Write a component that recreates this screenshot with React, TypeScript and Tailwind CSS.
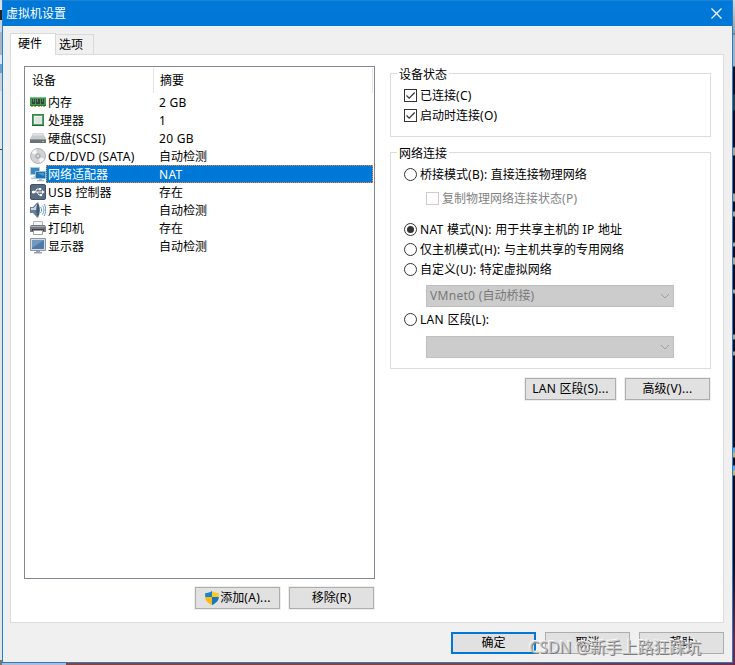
import { useState } from 'react';
import type { ReactNode } from 'react';

// Latin runs are spaced a little wider than the Chinese ones
const Txt = ({ children }: { children: string }) => (
    <>
        {children.split(/([\x20-\x7e]+)/).map((part, i) =>
            i % 2 ? <span key={i} className="tracking-[0.3px] whitespace-pre">{part}</span> : part
        )}
    </>
);

const MemoryIcon = () => (
    <svg width="16" height="16" viewBox="0 0 16 16" shapeRendering="crispEdges">
        <path d="M0 3h16v9H0z" fill="#3f9a4d" />
        <path d="M0 3h16v1H0z" fill="#7cc385" />
        <path d="M2 5h3v5H2zM6 5h4v5H6zM11 5h3v5h-3z" fill="#33433a" />
        <path d="M3 5h1v3H3zM7 5h1v3H7zM12 5h1v3h-1z" fill="#71817a" />
        <path d="M1 12h2v1H1zM4 12h2v1H4zM8 12h2v1H8zM11 12h1v1h-1zM13 12h2v1h-2z" fill="#c79f3d" />
        <path d="M0 11h16v1H0z" fill="#23733a" />
    </svg>
);

const CpuIcon = () => (
    <svg width="16" height="16" viewBox="0 0 16 16">
        <path d="M2 2h12v12H2z" fill="#37864d" />
        <path d="M3 3h10v10H3z" fill="#55a36a" />
        <path d="M4 4h8v8H4z" fill="#f1f3f2" />
        <path d="M5 5h7v7H5z" fill="#dfe3e1" />
        <path d="M2 13h12v1H2z" fill="#1e6634" />
    </svg>
);

const DiskIcon = () => (
    <svg width="16" height="16" viewBox="0 0 16 16">
        <path d="M3 3h10l3 6H0z" fill="#c6c9ce" />
        <path d="M3.5 3.5h9l1 2h-11z" fill="#e1e3e6" />
        <path d="M0 9h16v4H0z" fill="#6d727a" />
        <path d="M0 9h16v1H0z" fill="#91959c" />
        <path d="M12 11h2v1h-2z" fill="#74d878" />
    </svg>
);

const DiscIcon = () => (
    <svg width="16" height="16" viewBox="0 0 16 16">
        <circle cx="8" cy="8" r="7.5" fill="#d2d3d6" stroke="#a1a4aa" strokeWidth="0.8" />
        <path d="M8 8 1.6 5A7 7 0 0 1 6 1.3zM8 8l6.4 3a7 7 0 0 1-4.4 3.7z" fill="#f6f6f7" />
        <circle cx="8" cy="8" r="3" fill="#b7bac0" />
        <circle cx="8" cy="8" r="1.4" fill="#fff" stroke="#888c94" strokeWidth="0.6" />
    </svg>
);

const NetworkIcon = () => (
    <svg width="16" height="16" viewBox="0 0 16 16">
        <path d="M0.5 1.5h9v7h-9z" fill="#3c88bd" stroke="#a9cbe0" />
        <path d="M2 10h3v3H1v-1.5h2.5V10z" fill="#b5cbdc" />
        <path d="M5.5 5.5h10v7h-10z" fill="#2371aa" stroke="#8ec0e0" />
        <path d="M7 7h7v3z" fill="#4b9ccd" />
        <path d="M9 13h3v1h2v1.3H7V14h2z" fill="#a8bdcd" />
    </svg>
);

const UsbIcon = () => (
    <svg width="16" height="16" viewBox="0 0 16 16">
        <rect x="0.5" y="0.5" width="15" height="15" rx="1.5" fill="#586b80" stroke="#405268" />
        <path d="M3 8h10M5 8l2-3h2M7 8l2 3h2" fill="none" stroke="#fff" strokeWidth="1" />
        <circle cx="3.4" cy="8" r="1.6" fill="#fff" />
        <path d="m12 6 2.7 2L12 10zM9 4h2.2v2.2H9z" fill="#fff" />
        <circle cx="11" cy="11" r="1.2" fill="#fff" />
    </svg>
);

const SoundIcon = () => (
    <svg width="16" height="16" viewBox="0 0 16 16">
        <path d="M0 5h3l4-4.5h1.5v15H7L3 11H0z" fill="#687f96" />
        <path d="M1 6h2.5L7 2.5V8H1z" fill="#c5d6e4" />
        <ellipse cx="8" cy="8" rx="1.8" ry="6" fill="#405b76" />
        <path d="M10.5 5c1.5 1.5 1.5 4.5 0 6M12.3 3.5c2.2 2.5 2.2 6.5 0 9M14 2c2.3 3 2.3 9 0 12" fill="none" stroke="#5c9bcf" strokeWidth="1" />
    </svg>
);

const PrinterIcon = () => (
    <svg width="16" height="16" viewBox="0 0 16 16">
        <path d="M3.5 1.5h9v5h-9z" fill="#f5f5f6" stroke="#b2b3b8" />
        <path d="M1 5h14l1 2v5H0V7z" fill="#777a82" />
        <path d="M1 6h14v1H1z" fill="#a8abb1" />
        <path d="M2 9h12v2H2z" fill="#3e4048" />
        <path d="M3.5 10.5h9v4h-9z" fill="#fff" stroke="#9b9da3" />
    </svg>
);

const DisplayIcon = () => (
    <svg width="16" height="16" viewBox="0 0 16 16">
        <path d="M0.5 0.5h15v12H0.5z" fill="#d5dce3" stroke="#8b97a3" />
        <path d="M2 2h12v9H2z" fill="#4f7aa5" />
        <path d="M2 2h12L2 10z" fill="#7199bf" />
        <path d="M6 13h4v1h2v1.5H4V14h2z" fill="#9aa3ad" />
    </svg>
);

const ShieldIcon = () => (
    <svg width="16" height="16" viewBox="0 0 16 16">
        <path d="M8 1C6 2.6 3.5 3 1.2 3v4H8z" fill="#1d83cc" />
        <path d="M8 1c2 1.6 4.500 2 6.800 2v4H8z" fill="#fcc827" />
        <path d="M1.200 7c0 4 3.500 6.500 6.800 8V7z" fill="#f8b916" />
        <path d="M14.800 7c0 4-3.500 6.500-6.800 8V7z" fill="#1677bc" />
    </svg>
);

const devices = [
    { name: '内存', summary: '2 GB', icon: <MemoryIcon /> },
    { name: '处理器', summary: '1', icon: <CpuIcon /> },
    { name: '硬盘(SCSI)', summary: '20 GB', icon: <DiskIcon /> },
    { name: 'CD/DVD (SATA)', summary: '自动检测', icon: <DiscIcon /> },
    { name: '网络适配器', summary: 'NAT', icon: <NetworkIcon /> },
    { name: 'USB 控制器', summary: '存在', icon: <UsbIcon /> },
    { name: '声卡', summary: '自动检测', icon: <SoundIcon /> },
    { name: '打印机', summary: '存在', icon: <PrinterIcon /> },
    { name: '显示器', summary: '自动检测', icon: <DisplayIcon /> },
];

const Button = ({ children, className = 'w-[85px]', primary = false }: { children: ReactNode; className?: string; primary?: boolean }) => (
    <button className={`h-[22px] flex items-center justify-center bg-[#e1e1e1] ${primary ? 'border-2 border-[#0078d7]' : 'border border-[#adadad] outline outline-[#efefef]'} ${className}`}>
        {children}
    </button>
);

const Group = ({ title, children, className }: { title: string; children: ReactNode; className: string }) => (
    <section className={`relative border border-[#dcdcdc] ${className}`}>
        <h2 className="absolute left-[6px] -top-[8px] bg-white px-[2px] leading-[18px]">{title}</h2>
        {children}
    </section>
);

const Check = ({ label, checked, disabled }: { label: string; checked?: boolean; disabled?: boolean }) => (
    <label className={`flex h-[20px] items-center gap-[3px] ${disabled ? 'text-[#838383]' : ''}`}>
        <span className={`size-[13px] border bg-white -translate-y-px ${disabled ? 'border-[#cccccc]' : 'border-[#333]'}`}>
            {checked && (
                <svg width="11" height="11" viewBox="0 0 11 11" fill="none" stroke="#333" strokeWidth="1.2">
                    <path d="m1.500 5.500 2.700 2.700L9.700 2.500" />
                </svg>
            )}
        </span>
        <span><Txt>{label}</Txt></span>
    </label>
);

const Radio = ({ label, checked, onClick }: { label: string; checked: boolean; onClick: () => void }) => (
    <label className="flex h-[20px] items-center gap-[3px]" onClick={onClick}>
        <span className="size-[13px] rounded-full border border-[#333] bg-white flex items-center justify-center -translate-y-px">
            {checked && <span className="size-[7px] rounded-full bg-[#333]" />}
        </span>
        <span><Txt>{label}</Txt></span>
    </label>
);

const Combo = ({ value = '' }: { value?: string }) => (
    <div className="ml-[22px] w-[248px] h-[22px] flex items-center justify-between border border-[#bfbfbf] bg-[#cccccc] pl-[3px] pr-[3px] text-[#787878]">
        <span><Txt>{value}</Txt></span>
        <svg width="10" height="6" viewBox="0 0 10 6" fill="none" stroke="#a0a0a0">
            <path d="m1 1 4 4 4-4" />
        </svg>
    </div>
);

export default function App() {
    const [selected, setSelected] = useState(4);
    const [mode, setMode] = useState('nat');

    return (
        <div className="relative w-[735px] h-[665px] overflow-hidden flex bg-[#8e4334] text-[12px] leading-[18px] text-black font-['Noto_Sans','Noto_Sans_CJK_SC',sans-serif]">
            <div className="w-[2px] h-[665px] shrink-0 bg-[linear-gradient(#d9dfe6_0_10px,#222_10px_20px,#c9d2dc_20px_32px,#aab4c4_32px_55px,#dce6ef_55px_64px,#6f9dce_64px_73px,#ccd0d8_73px_91px,#e4e4e4_91px_149px,#345_149px_150px,#e4e4e4_150px_660px,#777_660px)]" />

            <div className="w-[731px] h-[665px] flex flex-col">
                <main className="h-[663px] bg-[#f0f0f0] border-x border-b border-[#1883d7] flex flex-col">
                    <header className="h-[26px] shrink-0 bg-[#0078d7] border-t border-[#1883d7] text-white flex items-center justify-between pl-[3px] pr-[10px]">
                        <h1>虚拟机设置</h1>
                        <svg width="11" height="11" viewBox="0 0 11 11" stroke="#fff" strokeWidth="1.200">
                            <path d="m0.500 0.500 10 10M10.500 0.500l-10 10" />
                        </svg>
                    </header>

                    <nav className="relative z-10 h-[29px] shrink-0 pl-[7px] flex items-end">
                        <div className="w-[46px] h-[22px] bg-white border border-b-0 border-[#d9d9d9] pl-[7px] pt-px">硬件</div>
                        <div className="w-[38px] h-[20px] mb-px border border-b-0 border-l-0 border-[#d9d9d9] pl-[3px] pt-px">选项</div>
                    </nav>

                    <div className="ml-[7px] -mt-px w-[714px] h-[569px] shrink-0 bg-white border border-[#dcdcdc] pl-[13px] pt-[11px] flex">
                        <div className="w-[351px]">
                            <div className="w-[351px] h-[513px] border border-[#828790] pt-px">
                                <div className="h-[25px] flex items-center pl-[7px] border-r border-[#e5e5e5] mr-px">
                                    <div className="w-[122px] h-[25px] pt-[4px] border-r border-[#e5e5e5]">设备</div>
                                    <div className="pl-[6px]">摘要</div>
                                </div>
                                <ul>
                                    {devices.map((d, i) => (
                                        <li key={d.name} className="h-[18px] flex items-center pl-[5px] pr-px" onClick={() => setSelected(i)}>
                                            <span className="w-[16px] shrink-0">{d.icon}</span>
                                            <div className={`flex flex-1 h-[18px] border border-dotted ${i === selected ? 'bg-[#0078d7] border-[#ff8728] text-white' : 'border-transparent'}`}>
                                                <span className="w-[112px] pl-px leading-[17px] whitespace-nowrap"><Txt>{d.name}</Txt></span>
                                                <span className="leading-[17px]"><Txt>{d.summary}</Txt></span>
                                            </div>
                                        </li>
                                    ))}
                                </ul>
                            </div>
                            <div className="flex justify-end gap-[9px] pt-[8px] pr-px">
                                <Button><ShieldIcon /><span><Txt>添加(A)...</Txt></span></Button>
                                <Button><span><Txt>移除(R)</Txt></span></Button>
                            </div>
                        </div>

                        <div className="ml-[15px] pt-[7px] w-[321px]">
                            <Group title="设备状态" className="h-[64px] pl-[13px] pt-[12px]">
                                <Check label="已连接(C)" checked />
                                <Check label="启动时连接(O)" checked />
                            </Group>
                            <Group title="网络连接" className="mt-[15px] h-[217px] pl-[13px] pt-[12px]">
                                <Radio label="桥接模式(B): 直接连接物理网络" checked={mode === 'bridged'} onClick={() => setMode('bridged')} />
                                <div className="ml-[22px] mt-[4px] mb-[11px]">
                                    <Check label="复制物理网络连接状态(P)" disabled />
                                </div>
                                <Radio label="NAT 模式(N): 用于共享主机的 IP 地址" checked={mode === 'nat'} onClick={() => setMode('nat')} />
                                <Radio label="仅主机模式(H): 与主机共享的专用网络" checked={mode === 'host'} onClick={() => setMode('host')} />
                                <Radio label="自定义(U): 特定虚拟网络" checked={mode === 'custom'} onClick={() => setMode('custom')} />
                                <div className="mt-[5px] mb-[3px]"><Combo value="VMnet0 (自动桥接)" /></div>
                                <Radio label="LAN 区段(L):" checked={mode === 'lan'} onClick={() => setMode('lan')} />
                                <div className="mt-[6px]"><Combo /></div>
                            </Group>
                            <div className="flex justify-end gap-[9px] mt-[9px] pr-px">
                                <Button className="w-[91px]"><span><Txt>LAN 区段(S)...</Txt></span></Button>
                                <Button><span><Txt>高级(V)...</Txt></span></Button>
                            </div>
                        </div>
                    </div>

                    <footer className="flex justify-end gap-[9px] pt-[9px] pr-[8px]">
                        <Button primary>确定</Button>
                        <Button>取消</Button>
                        <Button>帮助</Button>
                    </footer>
                </main>
                <div className="h-[2px] bg-[linear-gradient(90deg,#b7b9cf_0_64px,#8f402f_64px_480px,#7d2a3e)]" />
            </div>

            <div className="w-[2px] h-[665px] bg-[linear-gradient(#d8d8d8_0,#9a9a9a_33px,#555_34px,#a8b0be_35px_66px,#150818_67px_94px,#33393d_95px_110px,#180514_111px_147px,#bba08a_148px_155px,#180514_156px_193px,#bba08a_194px_201px,#180514_202px_211px,#bba08a_212px_216px,#180514_217px_242px,#bba08a_243px_246px,#180514_247px_257px,#bba08a_258px_264px,#180514_265px_289px,#bba08a_290px_293px,#180514_294px_334px,#bba08a_335px_339px,#180514_340px_351px,#bba08a_352px_355px,#180514_356px_447px,#6ba4df_448px_452px,#d5b16c_453px_457px,#180514_458px_465px,#6ba4df_466px_470px,#d5b16c_471px_475px,#180514_476px_560px,#7b2440_640px)]" />

            <div className="absolute left-[529px] top-[636px] whitespace-nowrap text-[16px] leading-[22px] tracking-[-0.1px] text-[#c8c8c8]/80 [text-shadow:1px_1px_0_#7d7d7d,-1px_-1px_0_#f8f8f8]">
                CSDN @新手上路狂踩坑
            </div>
        </div>
    );
}
